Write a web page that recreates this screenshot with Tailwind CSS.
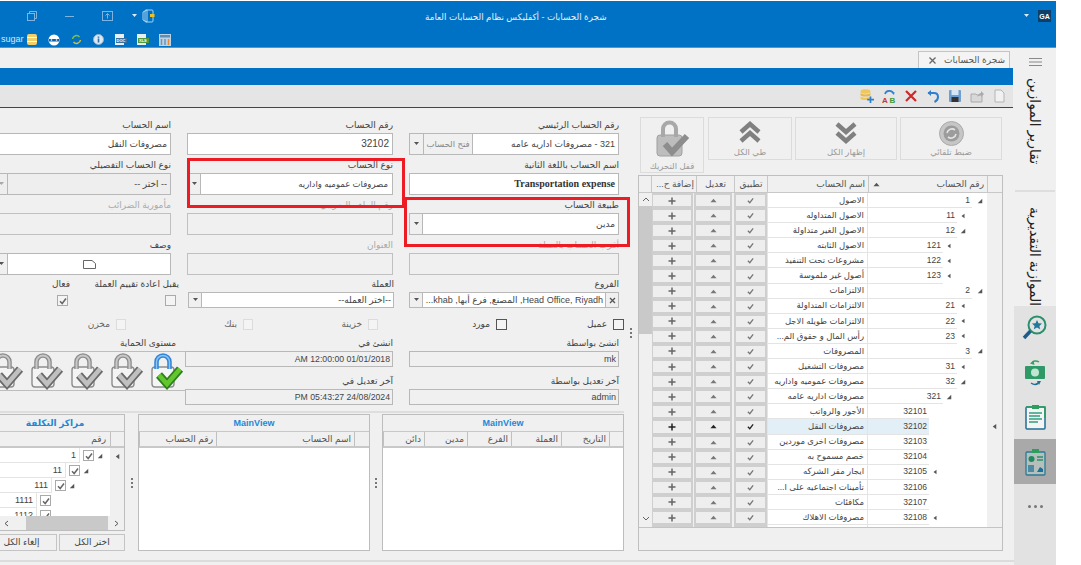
<!DOCTYPE html>
<html lang="ar">
<head>
<meta charset="utf-8">
<title>شجرة الحسابات</title>
<script src="https://cdn.jsdelivr.net/npm/@tailwindcss/browser@4"></script>
</head>
<body class="bg-white overflow-hidden">
<svg class="hidden" width="0" height="0">
  <defs>
    <symbol id="exp" viewBox="0 0 8 8"><path d="M7 1V7H1Z" fill="#555"/></symbol>
    <symbol id="col" viewBox="0 0 8 8"><path d="M6 1V7L2 4Z" fill="#555"/></symbol>
    <symbol id="plus" viewBox="0 0 8 8"><path d="M4 .5V7.500M.5 4H7.500" stroke="currentColor" stroke-width="1.500" fill="none"/></symbol>
    <symbol id="up" viewBox="0 0 8 8"><path d="M4 2L7.500 6H.5Z" fill="currentColor"/></symbol>
    <symbol id="chk" viewBox="0 0 8 8"><path d="M1 4.200L3.200 6.500L7 1.500" stroke="currentColor" stroke-width="1.500" fill="none"/></symbol>
    <symbol id="lockg" viewBox="0 0 36 38">
      <rect x="5" y="15" width="22" height="20" rx="3" fill="#f4f4f4" stroke="#8d8d8d" stroke-width="1.400"/>
      <path d="M9.500 17V10a6.500 6.500 0 0 1 13 0v7" fill="none" stroke="#8a8a8a" stroke-width="4.500"/>
      <path d="M9.500 17V10a6.500 6.500 0 0 1 13 0v7" fill="none" stroke="#c8c8c8" stroke-width="2"/>
      <path d="M12 23L20 32L33 17" fill="none" stroke="#6a6a6a" stroke-width="8"/>
      <path d="M12 23L20 32L33 17" fill="none" stroke="#c0c0c0" stroke-width="4.500"/>
    </symbol>
    <symbol id="lockc" viewBox="0 0 36 38">
      <rect x="5" y="15" width="22" height="20" rx="3" fill="#f5f5f5" stroke="#8d8d8d" stroke-width="1.400"/>
      <path d="M9.500 17V10a6.500 6.500 0 0 1 13 0v7" fill="none" stroke="#2f84d8" stroke-width="4.500"/>
      <path d="M9.500 17V10a6.500 6.500 0 0 1 13 0v7" fill="none" stroke="#8cc4f4" stroke-width="1.500"/>
      <path d="M12 23L20 32L33 17" fill="none" stroke="#2e7d1e" stroke-width="8"/>
      <path d="M12 23L20 32L33 17" fill="none" stroke="#62c72e" stroke-width="4.500"/>
    </symbol>
  </defs>
</svg>

<div class="w-[1081px] h-[565px] pt-px overflow-hidden bg-white text-[#444] text-[9px] leading-none [font-family:'Liberation_Sans','DejaVu_Sans',sans-serif]">
<div class="w-[1056px] h-[564px] flex flex-col">

  <!-- title bar -->
  <header class="h-[47px] shrink-0 bg-[#0072c6] flex flex-col border-b border-[#4a9ad8]">
    <div class="h-[30px] flex items-center relative">
      <svg class="ml-[27px] w-[10px] h-[10px]" viewBox="0 0 10 10" fill="none" stroke="#7fb4e0"><rect x=".5" y="2.500" width="7" height="7"/><path d="M2.500 2.500V.5H9.500V7.500H7.500"/></svg>
      <div class="ml-[28px] w-[9px] h-px bg-[#7fb4e0]"></div>
      <svg class="ml-[28px] w-[11px] h-[10px]" viewBox="0 0 11 10" fill="none" stroke="#7fb4e0"><rect x=".5" y=".5" width="10" height="9"/><path d="M5.500 7.500V3M3.500 4.500L5.500 2.500L7.500 4.500"/></svg>
      <svg class="ml-[19px] w-[5px] h-[4px]" viewBox="0 0 5 4"><path d="M0 0H5L2.500 3Z" fill="#dcecf8"/></svg>
      <svg class="ml-[5px] w-[13px] h-[14px]" viewBox="0 0 13 14" fill="none" stroke="#a9d3f3"><rect x="3" y="1" width="8" height="12" rx="1"/><path d="M1 3L5 1V13L1 11Z"/><rect x="8" y="5" width="4.500" height="3" fill="#f0c020" stroke="none"/></svg>
      <span dir="rtl" class="absolute left-[425px] top-[12px] text-[8.800px] text-[#e6f1fa] whitespace-nowrap">شجرة الحسابات - أكفليكس نظام الحسابات العامة</span>
      <svg class="ml-auto w-[5px] h-[4px]" viewBox="0 0 5 4"><path d="M0 0H5L2.500 3Z" fill="#dcecf8"/></svg>
      <div class="ml-[9px] mr-[5px] w-[13px] h-[12px] bg-[#0f3f66] text-white text-[7px] font-bold flex items-center justify-center">GA</div>
    </div>
    <div class="h-[16px] flex items-center text-[#d6e8f6] text-[9px] pt-px">
      <span class="w-[27px] pl-px text-left">sugar</span>
      <svg class="w-[10px] h-[11px]" viewBox="0 0 10 11"><rect width="10" height="11" rx="2" fill="#f3cf6a"/><path d="M0 3.500H10M0 7.500H10" stroke="#fff"/></svg>
      <svg class="ml-[11px] w-[12px] h-[12px]" viewBox="0 0 12 12"><circle cx="6" cy="6" r="5.500" fill="#fff"/><rect x="1" y="5" width="10" height="2.500" fill="#0f5fa8"/><circle cx="3.500" cy="6" r=".8" fill="#fff"/><circle cx="8.500" cy="6" r=".8" fill="#fff"/></svg>
      <svg class="ml-[11px] w-[11px] h-[11px]" viewBox="0 0 11 11" fill="none" stroke="#7fbf4a" stroke-width="1.500"><path d="M1.500 5a4 4 0 0 1 7-2"/><path d="M9.500 6a4 4 0 0 1-7 2" stroke="#c9c34a"/></svg>
      <svg class="ml-[11px] w-[11px] h-[11px]" viewBox="0 0 11 11"><circle cx="5.500" cy="5.500" r="5" fill="#dce8f2" stroke="#8fb2cc"/><rect x="4.700" y="4.500" width="1.600" height="4" fill="#2f6ea5"/><rect x="4.700" y="2.500" width="1.600" height="1.300" fill="#2f6ea5"/></svg>
      <svg class="ml-[11px] w-[12px] h-[11px]" viewBox="0 0 12 11"><rect x="0" y="0" width="9" height="11" fill="#e7eef4"/><rect x="1" y="4" width="11" height="5" fill="#3c6f9e"/><text x="1.500" y="8.200" font-size="4" font-weight="700" fill="#fff">DOC</text></svg>
      <svg class="ml-[10px] w-[12px] h-[11px]" viewBox="0 0 12 11"><rect x="0" y="0" width="9" height="11" fill="#e7eef4"/><rect x="1" y="4" width="11" height="5" fill="#4f9a3f"/><text x="2" y="8.200" font-size="4" font-weight="700" fill="#fff">XLS</text></svg>
      <svg class="ml-[10px] w-[12px] h-[12px]" viewBox="0 0 12 12"><rect width="12" height="12" fill="#bcd3e6"/><rect x="1" y="1" width="10" height="2.500" fill="#5f8db3"/><path d="M2.500 5V11M6 5V11" stroke="#6f93b0" stroke-width="1.500"/><path d="M9.500 5V11" stroke="#e08a3c" stroke-width="1.500"/></svg>
    </div>
  </header>

  <div class="flex-1 flex min-h-0">
    <!-- main -->
    <main dir="rtl" class="w-[1014px] shrink-0 flex flex-col bg-[#f0f0f0] overflow-hidden">
      <div class="h-[20px] shrink-0 flex items-end pr-[4px]">
        <div class="w-[92px] h-[17px] bg-[#f4f4f4] border border-b-0 border-[#c4c4c4] flex items-center justify-between pr-[4px] pl-[10px] text-[9px] text-[#555]">
          <span>شجرة الحسابات</span>
          <svg class="w-[7px] h-[7px]" viewBox="0 0 7 7"><path d="M.5 .5L6.500 6.500M6.500 .5L.5 6.500" stroke="#666" stroke-width="1.300"/></svg>
        </div>
      </div>
      <div class="h-[17px] shrink-0 bg-[#0072c6] mr-px"></div>
      <div class="h-[23px] shrink-0 bg-[#e5e5e5] border-b border-[#444] flex items-center gap-[8px] pr-[7px] mr-px">
        <svg class="w-[14px] h-[14px]" viewBox="0 0 14 14" fill="#f1f1f1" stroke="#b5b5b5"><path d="M3 1H9L12 4V13H3Z"/></svg>
        <svg class="w-[14px] h-[14px]" viewBox="0 0 14 14"><path d="M1 5H6L7 6H12V13H1Z" fill="#d8d8d8" stroke="#aaa"/><path d="M7 8C8 5 10 4 11 4V2L14 5L11 8V6C9.500 6 8 7 7 8Z" fill="#aaa"/></svg>
        <svg class="w-[14px] h-[14px]" viewBox="0 0 14 14"><rect x="1" y="1" width="12" height="12" rx="1" fill="#6f9fd0"/><rect x="3.500" y="1" width="7" height="5" fill="#d7e6f4"/><rect x="3.500" y="8" width="7" height="5" fill="#333"/></svg>
        <svg class="w-[14px] h-[14px]" viewBox="0 0 14 14" fill="none"><path d="M2 4H8C11 4 12 6 12 8C12 10.500 10.500 12 8.500 13" stroke="#2f7fd0" stroke-width="2"/><path d="M5 1L1.500 4L5 7Z" fill="#2f7fd0"/></svg>
        <svg class="w-[14px] h-[14px]" viewBox="0 0 14 14"><path d="M2 2L12 12M12 2L2 12" stroke="#cc2a2a" stroke-width="2.200"/></svg>
        <svg class="w-[14px] h-[14px]" viewBox="0 0 14 14"><path d="M3 5C4 1 10 1 11 4" fill="none" stroke="#2f7fd0" stroke-width="1.600"/><path d="M9.500 3.500L12.500 3L12 6Z" fill="#2f7fd0"/><text x="0" y="13.500" direction="ltr" font-size="8" font-weight="700" fill="#c83434">A</text><text x="7.500" y="13.500" direction="ltr" font-size="8" font-weight="700" fill="#3d9a3d">B</text></svg>
        <svg class="w-[14px] h-[14px]" viewBox="0 0 14 14"><ellipse cx="5.500" cy="2.500" rx="5" ry="2.200" fill="#f0c75c"/><path d="M.5 3.500C.5 6 10.500 6 10.500 3.500V6C10.500 8 .5 8 .5 6Z" fill="#e8b84a"/><path d="M.5 7C.5 9.200 10.500 9.200 10.500 7V9.500C10.500 11.500 .5 11.500 .5 9.500Z" fill="#f0c75c"/><path d="M10.500 7.500V14M7.200 10.700H14" stroke="#2f7fd0" stroke-width="1.700"/></svg>
      </div>

      <div class="h-[454px] shrink-0 border-b-2 border-[#dcdcdc] flex pr-[11px]">
        <!-- accounts tree panel -->
        <section class="w-[365px] shrink-0 flex flex-col pt-[9px]">
          <div class="h-[58px] shrink-0 flex items-start text-[8.500px] text-[#9a9a9a] pr-px">
            <div class="w-[102px] h-[43px] border border-[#dcdcdc] flex flex-col items-center justify-between py-[3px]">
              <svg class="w-[25px] h-[25px]" viewBox="0 0 25 25"><circle cx="12.500" cy="12.500" r="12" fill="#c6c6c6" stroke="#aaa"/><circle cx="12.500" cy="12.500" r="8" fill="#9c9c9c"/><path d="M8 12a5 5 0 0 1 8-3M17 13a5 5 0 0 1-8 3" stroke="#e4e4e4" stroke-width="1.600" fill="none"/></svg>
              <span>ضبط تلقائي</span>
            </div>
            <div class="w-[102px] h-[43px] mr-[3px] border border-[#dcdcdc] flex flex-col items-center justify-between py-[3px]">
              <svg class="w-[22px] h-[23px]" viewBox="0 0 22 23" fill="none" stroke="#808080" stroke-width="4.500"><path d="M2 3L11 11L20 3M2 12L11 20L20 12"/></svg>
              <span>إظهار الكل</span>
            </div>
            <div class="w-[84px] h-[43px] mr-[3px] border border-[#dcdcdc] flex flex-col items-center justify-between py-[3px]">
              <svg class="w-[22px] h-[23px]" viewBox="0 0 22 23" fill="none" stroke="#808080" stroke-width="4.500"><path d="M2 11L11 3L20 11M2 20L11 12L20 20"/></svg>
              <span>طي الكل</span>
            </div>
            <div class="w-[64px] h-[56px] mr-[4px] border border-[#dcdcdc] flex flex-col items-center justify-between py-[2px] text-[8.500px]">
              <svg class="w-[36px] h-[38px]" viewBox="0 0 36 38"><rect x="3" y="15" width="25" height="21" rx="3" fill="#bdbdbd" stroke="#a0a0a0"/><path d="M9 17V9a6.500 6.500 0 0 1 13 0v8" fill="none" stroke="#a8a8a8" stroke-width="4"/><path d="M11 24L18 32L33 16" fill="none" stroke="#8d8d8d" stroke-width="6"/></svg>
              <span>قفل التحريك</span>
            </div>
          </div>

          <div class="h-[376px] shrink-0 border border-[#bfbfbf] flex flex-col">
            <!-- header -->
            <div class="h-[17px] shrink-0 flex text-[9px] text-[#555] border-b border-[#c8c8c8] bg-[#f0f0f0]">
              <div class="w-[15px] shrink-0 border-l border-[#c8c8c8]"></div>
              <div class="w-[119px] shrink-0 border-l border-[#c8c8c8] flex items-center justify-between pr-[3px] pl-[4px]"><span>رقم الحساب</span><svg class="w-[7px] h-[7px] text-[#555]"><use href="#up"/></svg></div>
              <div class="w-[101px] shrink-0 border-l border-[#c8c8c8] flex items-center pr-[3px]">اسم الحساب</div>
              <div class="w-[33px] shrink-0 border-l border-[#c8c8c8] flex items-center justify-center">تطبيق</div>
              <div class="w-[38px] shrink-0 border-l border-[#c8c8c8] flex items-center justify-center">تعديل</div>
              <div class="w-[45px] shrink-0 border-l border-[#c8c8c8] flex items-center pr-[2px] whitespace-nowrap">إضافة ح...</div>
            </div>
            <!-- body -->
            <div class="h-[334px] shrink-0 flex overflow-hidden">
              <div class="w-[350px] shrink-0 flex flex-col text-[8.500px]">
                <div class="h-[15.100px] shrink-0 flex"><div class="w-[15px] bg-[#f0f0f0] shrink-0"></div><div class="w-[119px] flex shrink-0 bg-white"><div class="w-[15px] shrink-0 flex items-center justify-center"><svg class="w-[6px] h-[6px]"><use href="#exp"/></svg></div><div class="flex-1 bg-white border-b border-[#e4e4e4] pr-[2px] flex items-center"><span dir="ltr">1</span></div></div><div class="w-[101px] shrink-0 bg-white border-x border-b border-[#e4e4e4] pr-[3px] flex items-center">الاصول</div><div class="w-[33px] shrink-0 bg-[#eeeeee] border-2 border-[#cfcfcf] flex items-center justify-center text-[#777]"><svg class="w-[7px] h-[7px]"><use href="#chk"/></svg></div><div class="w-[38px] shrink-0 mr-[2px] bg-[#eeeeee] border-2 border-[#cfcfcf] flex items-center justify-center text-[#777]"><svg class="w-[7px] h-[7px]"><use href="#up"/></svg></div><div class="w-[42px] shrink-0 mr-[1px] bg-[#eeeeee] border-2 border-[#cfcfcf] flex items-center justify-center text-[#666]"><svg class="w-[8px] h-[8px]"><use href="#plus"/></svg></div></div>
                <div class="h-[15.100px] shrink-0 flex"><div class="w-[15px] bg-[#f0f0f0] shrink-0"></div><div class="w-[119px] flex shrink-0 bg-white"><div class="w-[30px] shrink-0 flex items-center justify-end pl-[3px]"><svg class="w-[6px] h-[6px]"><use href="#col"/></svg></div><div class="flex-1 bg-white border-b border-[#e4e4e4] pr-[2px] flex items-center">11</div></div><div class="w-[101px] shrink-0 bg-white border-x border-b border-[#e4e4e4] pr-[3px] flex items-center">الاصول المتداوله</div><div class="w-[33px] shrink-0 bg-[#eeeeee] border-2 border-[#cfcfcf] flex items-center justify-center text-[#777]"><svg class="w-[7px] h-[7px]"><use href="#chk"/></svg></div><div class="w-[38px] shrink-0 mr-[2px] bg-[#eeeeee] border-2 border-[#cfcfcf] flex items-center justify-center text-[#777]"><svg class="w-[7px] h-[7px]"><use href="#up"/></svg></div><div class="w-[42px] shrink-0 mr-[1px] bg-[#eeeeee] border-2 border-[#cfcfcf] flex items-center justify-center text-[#666]"><svg class="w-[8px] h-[8px]"><use href="#plus"/></svg></div></div>
                <div class="h-[15.100px] shrink-0 flex"><div class="w-[15px] bg-[#f0f0f0] shrink-0"></div><div class="w-[119px] flex shrink-0 bg-white"><div class="w-[30px] shrink-0 flex items-center justify-end pl-[3px]"><svg class="w-[6px] h-[6px]"><use href="#exp"/></svg></div><div class="flex-1 bg-white border-b border-[#e4e4e4] pr-[2px] flex items-center">12</div></div><div class="w-[101px] shrink-0 bg-white border-x border-b border-[#e4e4e4] pr-[3px] flex items-center">الاصول الغير متداولة</div><div class="w-[33px] shrink-0 bg-[#eeeeee] border-2 border-[#cfcfcf] flex items-center justify-center text-[#777]"><svg class="w-[7px] h-[7px]"><use href="#chk"/></svg></div><div class="w-[38px] shrink-0 mr-[2px] bg-[#eeeeee] border-2 border-[#cfcfcf] flex items-center justify-center text-[#777]"><svg class="w-[7px] h-[7px]"><use href="#up"/></svg></div><div class="w-[42px] shrink-0 mr-[1px] bg-[#eeeeee] border-2 border-[#cfcfcf] flex items-center justify-center text-[#666]"><svg class="w-[8px] h-[8px]"><use href="#plus"/></svg></div></div>
                <div class="h-[15.100px] shrink-0 flex"><div class="w-[15px] bg-[#f0f0f0] shrink-0"></div><div class="w-[119px] flex shrink-0 bg-white"><div class="w-[44px] shrink-0 flex items-center justify-end pl-[3px]"><svg class="w-[6px] h-[6px]"><use href="#col"/></svg></div><div class="flex-1 bg-white border-b border-[#e4e4e4] pr-[2px] flex items-center">121</div></div><div class="w-[101px] shrink-0 bg-white border-x border-b border-[#e4e4e4] pr-[3px] flex items-center">الاصول الثابته</div><div class="w-[33px] shrink-0 bg-[#eeeeee] border-2 border-[#cfcfcf] flex items-center justify-center text-[#777]"><svg class="w-[7px] h-[7px]"><use href="#chk"/></svg></div><div class="w-[38px] shrink-0 mr-[2px] bg-[#eeeeee] border-2 border-[#cfcfcf] flex items-center justify-center text-[#777]"><svg class="w-[7px] h-[7px]"><use href="#up"/></svg></div><div class="w-[42px] shrink-0 mr-[1px] bg-[#eeeeee] border-2 border-[#cfcfcf] flex items-center justify-center text-[#666]"><svg class="w-[8px] h-[8px]"><use href="#plus"/></svg></div></div>
                <div class="h-[15.100px] shrink-0 flex"><div class="w-[15px] bg-[#f0f0f0] shrink-0"></div><div class="w-[119px] flex shrink-0 bg-white"><div class="w-[44px] shrink-0 flex items-center justify-end pl-[3px]"><svg class="w-[6px] h-[6px]"><use href="#col"/></svg></div><div class="flex-1 bg-white border-b border-[#e4e4e4] pr-[2px] flex items-center">122</div></div><div class="w-[101px] shrink-0 bg-white border-x border-b border-[#e4e4e4] pr-[3px] flex items-center">مشروعات تحت التنفيذ</div><div class="w-[33px] shrink-0 bg-[#eeeeee] border-2 border-[#cfcfcf] flex items-center justify-center text-[#777]"><svg class="w-[7px] h-[7px]"><use href="#chk"/></svg></div><div class="w-[38px] shrink-0 mr-[2px] bg-[#eeeeee] border-2 border-[#cfcfcf] flex items-center justify-center text-[#777]"><svg class="w-[7px] h-[7px]"><use href="#up"/></svg></div><div class="w-[42px] shrink-0 mr-[1px] bg-[#eeeeee] border-2 border-[#cfcfcf] flex items-center justify-center text-[#666]"><svg class="w-[8px] h-[8px]"><use href="#plus"/></svg></div></div>
                <div class="h-[15.100px] shrink-0 flex"><div class="w-[15px] bg-[#f0f0f0] shrink-0"></div><div class="w-[119px] flex shrink-0 bg-white"><div class="w-[44px] shrink-0 flex items-center justify-end pl-[3px]"><svg class="w-[6px] h-[6px]"><use href="#col"/></svg></div><div class="flex-1 bg-white border-b border-[#e4e4e4] pr-[2px] flex items-center">123</div></div><div class="w-[101px] shrink-0 bg-white border-x border-b border-[#e4e4e4] pr-[3px] flex items-center">أصول غير ملموسة</div><div class="w-[33px] shrink-0 bg-[#eeeeee] border-2 border-[#cfcfcf] flex items-center justify-center text-[#777]"><svg class="w-[7px] h-[7px]"><use href="#chk"/></svg></div><div class="w-[38px] shrink-0 mr-[2px] bg-[#eeeeee] border-2 border-[#cfcfcf] flex items-center justify-center text-[#777]"><svg class="w-[7px] h-[7px]"><use href="#up"/></svg></div><div class="w-[42px] shrink-0 mr-[1px] bg-[#eeeeee] border-2 border-[#cfcfcf] flex items-center justify-center text-[#666]"><svg class="w-[8px] h-[8px]"><use href="#plus"/></svg></div></div>
                <div class="h-[15.100px] shrink-0 flex"><div class="w-[15px] bg-[#f0f0f0] shrink-0"></div><div class="w-[119px] flex shrink-0 bg-white"><div class="w-[15px] shrink-0 flex items-center justify-center"><svg class="w-[6px] h-[6px]"><use href="#exp"/></svg></div><div class="flex-1 bg-white border-b border-[#e4e4e4] pr-[2px] flex items-center">2</div></div><div class="w-[101px] shrink-0 bg-white border-x border-b border-[#e4e4e4] pr-[3px] flex items-center">الالتزامات</div><div class="w-[33px] shrink-0 bg-[#eeeeee] border-2 border-[#cfcfcf] flex items-center justify-center text-[#777]"><svg class="w-[7px] h-[7px]"><use href="#chk"/></svg></div><div class="w-[38px] shrink-0 mr-[2px] bg-[#eeeeee] border-2 border-[#cfcfcf] flex items-center justify-center text-[#777]"><svg class="w-[7px] h-[7px]"><use href="#up"/></svg></div><div class="w-[42px] shrink-0 mr-[1px] bg-[#eeeeee] border-2 border-[#cfcfcf] flex items-center justify-center text-[#666]"><svg class="w-[8px] h-[8px]"><use href="#plus"/></svg></div></div>
                <div class="h-[15.100px] shrink-0 flex"><div class="w-[15px] bg-[#f0f0f0] shrink-0"></div><div class="w-[119px] flex shrink-0 bg-white"><div class="w-[30px] shrink-0 flex items-center justify-end pl-[3px]"><svg class="w-[6px] h-[6px]"><use href="#col"/></svg></div><div class="flex-1 bg-white border-b border-[#e4e4e4] pr-[2px] flex items-center">21</div></div><div class="w-[101px] shrink-0 bg-white border-x border-b border-[#e4e4e4] pr-[3px] flex items-center">الالتزامات المتداولة</div><div class="w-[33px] shrink-0 bg-[#eeeeee] border-2 border-[#cfcfcf] flex items-center justify-center text-[#777]"><svg class="w-[7px] h-[7px]"><use href="#chk"/></svg></div><div class="w-[38px] shrink-0 mr-[2px] bg-[#eeeeee] border-2 border-[#cfcfcf] flex items-center justify-center text-[#777]"><svg class="w-[7px] h-[7px]"><use href="#up"/></svg></div><div class="w-[42px] shrink-0 mr-[1px] bg-[#eeeeee] border-2 border-[#cfcfcf] flex items-center justify-center text-[#666]"><svg class="w-[8px] h-[8px]"><use href="#plus"/></svg></div></div>
                <div class="h-[15.100px] shrink-0 flex"><div class="w-[15px] bg-[#f0f0f0] shrink-0"></div><div class="w-[119px] flex shrink-0 bg-white"><div class="w-[30px] shrink-0 flex items-center justify-end pl-[3px]"><svg class="w-[6px] h-[6px]"><use href="#col"/></svg></div><div class="flex-1 bg-white border-b border-[#e4e4e4] pr-[2px] flex items-center">22</div></div><div class="w-[101px] shrink-0 bg-white border-x border-b border-[#e4e4e4] pr-[3px] flex items-center">الالتزامات طويله الاجل</div><div class="w-[33px] shrink-0 bg-[#eeeeee] border-2 border-[#cfcfcf] flex items-center justify-center text-[#777]"><svg class="w-[7px] h-[7px]"><use href="#chk"/></svg></div><div class="w-[38px] shrink-0 mr-[2px] bg-[#eeeeee] border-2 border-[#cfcfcf] flex items-center justify-center text-[#777]"><svg class="w-[7px] h-[7px]"><use href="#up"/></svg></div><div class="w-[42px] shrink-0 mr-[1px] bg-[#eeeeee] border-2 border-[#cfcfcf] flex items-center justify-center text-[#666]"><svg class="w-[8px] h-[8px]"><use href="#plus"/></svg></div></div>
                <div class="h-[15.100px] shrink-0 flex"><div class="w-[15px] bg-[#f0f0f0] shrink-0"></div><div class="w-[119px] flex shrink-0 bg-white"><div class="w-[30px] shrink-0 flex items-center justify-end pl-[3px]"><svg class="w-[6px] h-[6px]"><use href="#col"/></svg></div><div class="flex-1 bg-white border-b border-[#e4e4e4] pr-[2px] flex items-center">23</div></div><div class="w-[101px] shrink-0 bg-white border-x border-b border-[#e4e4e4] pr-[3px] flex items-center">رأس المال و حقوق الم...</div><div class="w-[33px] shrink-0 bg-[#eeeeee] border-2 border-[#cfcfcf] flex items-center justify-center text-[#777]"><svg class="w-[7px] h-[7px]"><use href="#chk"/></svg></div><div class="w-[38px] shrink-0 mr-[2px] bg-[#eeeeee] border-2 border-[#cfcfcf] flex items-center justify-center text-[#777]"><svg class="w-[7px] h-[7px]"><use href="#up"/></svg></div><div class="w-[42px] shrink-0 mr-[1px] bg-[#eeeeee] border-2 border-[#cfcfcf] flex items-center justify-center text-[#666]"><svg class="w-[8px] h-[8px]"><use href="#plus"/></svg></div></div>
                <div class="h-[15.100px] shrink-0 flex"><div class="w-[15px] bg-[#f0f0f0] shrink-0"></div><div class="w-[119px] flex shrink-0 bg-white"><div class="w-[15px] shrink-0 flex items-center justify-center"><svg class="w-[6px] h-[6px]"><use href="#exp"/></svg></div><div class="flex-1 bg-white border-b border-[#e4e4e4] pr-[2px] flex items-center">3</div></div><div class="w-[101px] shrink-0 bg-white border-x border-b border-[#e4e4e4] pr-[3px] flex items-center">المصروفات</div><div class="w-[33px] shrink-0 bg-[#eeeeee] border-2 border-[#cfcfcf] flex items-center justify-center text-[#777]"><svg class="w-[7px] h-[7px]"><use href="#chk"/></svg></div><div class="w-[38px] shrink-0 mr-[2px] bg-[#eeeeee] border-2 border-[#cfcfcf] flex items-center justify-center text-[#777]"><svg class="w-[7px] h-[7px]"><use href="#up"/></svg></div><div class="w-[42px] shrink-0 mr-[1px] bg-[#eeeeee] border-2 border-[#cfcfcf] flex items-center justify-center text-[#666]"><svg class="w-[8px] h-[8px]"><use href="#plus"/></svg></div></div>
                <div class="h-[15.100px] shrink-0 flex"><div class="w-[15px] bg-[#f0f0f0] shrink-0"></div><div class="w-[119px] flex shrink-0 bg-white"><div class="w-[30px] shrink-0 flex items-center justify-end pl-[3px]"><svg class="w-[6px] h-[6px]"><use href="#col"/></svg></div><div class="flex-1 bg-white border-b border-[#e4e4e4] pr-[2px] flex items-center">31</div></div><div class="w-[101px] shrink-0 bg-white border-x border-b border-[#e4e4e4] pr-[3px] flex items-center">مصروفات التشغيل</div><div class="w-[33px] shrink-0 bg-[#eeeeee] border-2 border-[#cfcfcf] flex items-center justify-center text-[#777]"><svg class="w-[7px] h-[7px]"><use href="#chk"/></svg></div><div class="w-[38px] shrink-0 mr-[2px] bg-[#eeeeee] border-2 border-[#cfcfcf] flex items-center justify-center text-[#777]"><svg class="w-[7px] h-[7px]"><use href="#up"/></svg></div><div class="w-[42px] shrink-0 mr-[1px] bg-[#eeeeee] border-2 border-[#cfcfcf] flex items-center justify-center text-[#666]"><svg class="w-[8px] h-[8px]"><use href="#plus"/></svg></div></div>
                <div class="h-[15.100px] shrink-0 flex"><div class="w-[15px] bg-[#f0f0f0] shrink-0"></div><div class="w-[119px] flex shrink-0 bg-white"><div class="w-[30px] shrink-0 flex items-center justify-end pl-[3px]"><svg class="w-[6px] h-[6px]"><use href="#exp"/></svg></div><div class="flex-1 bg-white border-b border-[#e4e4e4] pr-[2px] flex items-center">32</div></div><div class="w-[101px] shrink-0 bg-white border-x border-b border-[#e4e4e4] pr-[3px] flex items-center">مصروفات عموميه واداريه</div><div class="w-[33px] shrink-0 bg-[#eeeeee] border-2 border-[#cfcfcf] flex items-center justify-center text-[#777]"><svg class="w-[7px] h-[7px]"><use href="#chk"/></svg></div><div class="w-[38px] shrink-0 mr-[2px] bg-[#eeeeee] border-2 border-[#cfcfcf] flex items-center justify-center text-[#777]"><svg class="w-[7px] h-[7px]"><use href="#up"/></svg></div><div class="w-[42px] shrink-0 mr-[1px] bg-[#eeeeee] border-2 border-[#cfcfcf] flex items-center justify-center text-[#666]"><svg class="w-[8px] h-[8px]"><use href="#plus"/></svg></div></div>
                <div class="h-[15.100px] shrink-0 flex"><div class="w-[15px] bg-[#f0f0f0] shrink-0"></div><div class="w-[119px] flex shrink-0 bg-white"><div class="w-[44px] shrink-0 flex items-center justify-end pl-[3px]"><svg class="w-[6px] h-[6px]"><use href="#exp"/></svg></div><div class="flex-1 bg-white border-b border-[#e4e4e4] pr-[2px] flex items-center">321</div></div><div class="w-[101px] shrink-0 bg-white border-x border-b border-[#e4e4e4] pr-[3px] flex items-center">مصروفات اداريه عامه</div><div class="w-[33px] shrink-0 bg-[#eeeeee] border-2 border-[#cfcfcf] flex items-center justify-center text-[#777]"><svg class="w-[7px] h-[7px]"><use href="#chk"/></svg></div><div class="w-[38px] shrink-0 mr-[2px] bg-[#eeeeee] border-2 border-[#cfcfcf] flex items-center justify-center text-[#777]"><svg class="w-[7px] h-[7px]"><use href="#up"/></svg></div><div class="w-[42px] shrink-0 mr-[1px] bg-[#eeeeee] border-2 border-[#cfcfcf] flex items-center justify-center text-[#666]"><svg class="w-[8px] h-[8px]"><use href="#plus"/></svg></div></div>
                <div class="h-[15.100px] shrink-0 flex"><div class="w-[15px] bg-[#f0f0f0] shrink-0"></div><div class="w-[119px] flex shrink-0 bg-white"><div class="w-[58px] shrink-0"></div><div class="flex-1 bg-white border-b border-[#e4e4e4] pr-[2px] flex items-center">32101</div></div><div class="w-[101px] shrink-0 bg-white border-x border-b border-[#e4e4e4] pr-[3px] flex items-center">الأجور والرواتب</div><div class="w-[33px] shrink-0 bg-[#eeeeee] border-2 border-[#cfcfcf] flex items-center justify-center text-[#777]"><svg class="w-[7px] h-[7px]"><use href="#chk"/></svg></div><div class="w-[38px] shrink-0 mr-[2px] bg-[#eeeeee] border-2 border-[#cfcfcf] flex items-center justify-center text-[#777]"><svg class="w-[7px] h-[7px]"><use href="#up"/></svg></div><div class="w-[42px] shrink-0 mr-[1px] bg-[#eeeeee] border-2 border-[#cfcfcf] flex items-center justify-center text-[#666]"><svg class="w-[8px] h-[8px]"><use href="#plus"/></svg></div></div>
                <div class="h-[15.100px] shrink-0 flex"><div class="w-[15px] bg-[#f0f0f0] shrink-0 flex items-center justify-center"><svg class="w-[7px] h-[7px]"><use href="#col"/></svg></div><div class="w-[119px] flex shrink-0 bg-white"><div class="w-[58px] shrink-0"></div><div class="flex-1 bg-[#e3eff7] border-b border-[#e4e4e4] pr-[2px] flex items-center">32102</div></div><div class="w-[101px] shrink-0 bg-[#e3eff7] border-x border-b border-[#e4e4e4] pr-[3px] flex items-center">مصروفات النقل</div><div class="w-[33px] shrink-0 bg-[#eeeeee] border-2 border-[#cfcfcf] flex items-center justify-center text-[#222]"><svg class="w-[7px] h-[7px]"><use href="#chk"/></svg></div><div class="w-[38px] shrink-0 mr-[2px] bg-[#eeeeee] border-2 border-[#cfcfcf] flex items-center justify-center text-[#222]"><svg class="w-[7px] h-[7px]"><use href="#up"/></svg></div><div class="w-[42px] shrink-0 mr-[1px] bg-[#eeeeee] border-2 border-[#cfcfcf] flex items-center justify-center text-[#222]"><svg class="w-[8px] h-[8px]"><use href="#plus"/></svg></div></div>
                <div class="h-[15.100px] shrink-0 flex"><div class="w-[15px] bg-[#f0f0f0] shrink-0"></div><div class="w-[119px] flex shrink-0 bg-white"><div class="w-[58px] shrink-0"></div><div class="flex-1 bg-white border-b border-[#e4e4e4] pr-[2px] flex items-center">32103</div></div><div class="w-[101px] shrink-0 bg-white border-x border-b border-[#e4e4e4] pr-[3px] flex items-center">مصروفات اخرى موردين</div><div class="w-[33px] shrink-0 bg-[#eeeeee] border-2 border-[#cfcfcf] flex items-center justify-center text-[#777]"><svg class="w-[7px] h-[7px]"><use href="#chk"/></svg></div><div class="w-[38px] shrink-0 mr-[2px] bg-[#eeeeee] border-2 border-[#cfcfcf] flex items-center justify-center text-[#777]"><svg class="w-[7px] h-[7px]"><use href="#up"/></svg></div><div class="w-[42px] shrink-0 mr-[1px] bg-[#eeeeee] border-2 border-[#cfcfcf] flex items-center justify-center text-[#666]"><svg class="w-[8px] h-[8px]"><use href="#plus"/></svg></div></div>
                <div class="h-[15.100px] shrink-0 flex"><div class="w-[15px] bg-[#f0f0f0] shrink-0"></div><div class="w-[119px] flex shrink-0 bg-white"><div class="w-[58px] shrink-0"></div><div class="flex-1 bg-white border-b border-[#e4e4e4] pr-[2px] flex items-center">32104</div></div><div class="w-[101px] shrink-0 bg-white border-x border-b border-[#e4e4e4] pr-[3px] flex items-center">خصم مسموح به</div><div class="w-[33px] shrink-0 bg-[#eeeeee] border-2 border-[#cfcfcf] flex items-center justify-center text-[#777]"><svg class="w-[7px] h-[7px]"><use href="#chk"/></svg></div><div class="w-[38px] shrink-0 mr-[2px] bg-[#eeeeee] border-2 border-[#cfcfcf] flex items-center justify-center text-[#777]"><svg class="w-[7px] h-[7px]"><use href="#up"/></svg></div><div class="w-[42px] shrink-0 mr-[1px] bg-[#eeeeee] border-2 border-[#cfcfcf] flex items-center justify-center text-[#666]"><svg class="w-[8px] h-[8px]"><use href="#plus"/></svg></div></div>
                <div class="h-[15.100px] shrink-0 flex"><div class="w-[15px] bg-[#f0f0f0] shrink-0"></div><div class="w-[119px] flex shrink-0 bg-white"><div class="w-[58px] shrink-0 flex items-center justify-end pl-[3px]"><svg class="w-[6px] h-[6px]"><use href="#col"/></svg></div><div class="flex-1 bg-white border-b border-[#e4e4e4] pr-[2px] flex items-center">32105</div></div><div class="w-[101px] shrink-0 bg-white border-x border-b border-[#e4e4e4] pr-[3px] flex items-center">ايجار مقر الشركه</div><div class="w-[33px] shrink-0 bg-[#eeeeee] border-2 border-[#cfcfcf] flex items-center justify-center text-[#777]"><svg class="w-[7px] h-[7px]"><use href="#chk"/></svg></div><div class="w-[38px] shrink-0 mr-[2px] bg-[#eeeeee] border-2 border-[#cfcfcf] flex items-center justify-center text-[#777]"><svg class="w-[7px] h-[7px]"><use href="#up"/></svg></div><div class="w-[42px] shrink-0 mr-[1px] bg-[#eeeeee] border-2 border-[#cfcfcf] flex items-center justify-center text-[#666]"><svg class="w-[8px] h-[8px]"><use href="#plus"/></svg></div></div>
                <div class="h-[15.100px] shrink-0 flex"><div class="w-[15px] bg-[#f0f0f0] shrink-0"></div><div class="w-[119px] flex shrink-0 bg-white"><div class="w-[58px] shrink-0"></div><div class="flex-1 bg-white border-b border-[#e4e4e4] pr-[2px] flex items-center">32106</div></div><div class="w-[101px] shrink-0 bg-white border-x border-b border-[#e4e4e4] pr-[3px] flex items-center whitespace-nowrap">تأمينات اجتماعيه على ا...</div><div class="w-[33px] shrink-0 bg-[#eeeeee] border-2 border-[#cfcfcf] flex items-center justify-center text-[#777]"><svg class="w-[7px] h-[7px]"><use href="#chk"/></svg></div><div class="w-[38px] shrink-0 mr-[2px] bg-[#eeeeee] border-2 border-[#cfcfcf] flex items-center justify-center text-[#777]"><svg class="w-[7px] h-[7px]"><use href="#up"/></svg></div><div class="w-[42px] shrink-0 mr-[1px] bg-[#eeeeee] border-2 border-[#cfcfcf] flex items-center justify-center text-[#666]"><svg class="w-[8px] h-[8px]"><use href="#plus"/></svg></div></div>
                <div class="h-[15.100px] shrink-0 flex"><div class="w-[15px] bg-[#f0f0f0] shrink-0"></div><div class="w-[119px] flex shrink-0 bg-white"><div class="w-[58px] shrink-0"></div><div class="flex-1 bg-white border-b border-[#e4e4e4] pr-[2px] flex items-center">32107</div></div><div class="w-[101px] shrink-0 bg-white border-x border-b border-[#e4e4e4] pr-[3px] flex items-center">مكافئات</div><div class="w-[33px] shrink-0 bg-[#eeeeee] border-2 border-[#cfcfcf] flex items-center justify-center text-[#777]"><svg class="w-[7px] h-[7px]"><use href="#chk"/></svg></div><div class="w-[38px] shrink-0 mr-[2px] bg-[#eeeeee] border-2 border-[#cfcfcf] flex items-center justify-center text-[#777]"><svg class="w-[7px] h-[7px]"><use href="#up"/></svg></div><div class="w-[42px] shrink-0 mr-[1px] bg-[#eeeeee] border-2 border-[#cfcfcf] flex items-center justify-center text-[#666]"><svg class="w-[8px] h-[8px]"><use href="#plus"/></svg></div></div>
                <div class="h-[15.100px] shrink-0 flex"><div class="w-[15px] bg-[#f0f0f0] shrink-0"></div><div class="w-[119px] flex shrink-0 bg-white"><div class="w-[58px] shrink-0 flex items-center justify-end pl-[3px]"><svg class="w-[6px] h-[6px]"><use href="#col"/></svg></div><div class="flex-1 bg-white border-b border-[#e4e4e4] pr-[2px] flex items-center">32108</div></div><div class="w-[101px] shrink-0 bg-white border-x border-b border-[#e4e4e4] pr-[3px] flex items-center">مصروفات الاهلاك</div><div class="w-[33px] shrink-0 bg-[#eeeeee] border-2 border-[#cfcfcf] flex items-center justify-center text-[#777]"><svg class="w-[7px] h-[7px]"><use href="#chk"/></svg></div><div class="w-[38px] shrink-0 mr-[2px] bg-[#eeeeee] border-2 border-[#cfcfcf] flex items-center justify-center text-[#777]"><svg class="w-[7px] h-[7px]"><use href="#up"/></svg></div><div class="w-[42px] shrink-0 mr-[1px] bg-[#eeeeee] border-2 border-[#cfcfcf] flex items-center justify-center text-[#666]"><svg class="w-[8px] h-[8px]"><use href="#plus"/></svg></div></div>
                <div class="h-[15.100px] shrink-0 flex"><div class="w-[15px] bg-[#f0f0f0] shrink-0"></div><div class="w-[119px] flex shrink-0 bg-white"><div class="w-[58px] shrink-0"></div><div class="flex-1 bg-white border-b border-[#e4e4e4]"></div></div><div class="w-[101px] shrink-0 bg-white border-x border-b border-[#e4e4e4]"></div><div class="w-[33px] shrink-0 bg-[#eeeeee] border-2 border-[#cfcfcf]"></div><div class="w-[38px] shrink-0 mr-[2px] bg-[#eeeeee] border-2 border-[#cfcfcf]"></div><div class="w-[42px] shrink-0 mr-[1px] bg-[#eeeeee] border-2 border-[#cfcfcf]"></div></div>
              </div>
              <div class="w-[13px] shrink-0 flex flex-col items-center bg-[#f0f0f0]">
                <svg class="mt-[4px] w-[8px] h-[5px]" viewBox="0 0 8 5" fill="none" stroke="#666"><path d="M1 4L4 1L7 4"/></svg>
                <div class="mt-[4px] w-full h-[128px] bg-[#c9c9c9]"></div>
                <svg class="mt-[182px] w-[8px] h-[5px]" viewBox="0 0 8 5" fill="none" stroke="#666"><path d="M1 1L4 4L7 1"/></svg>
              </div>
            </div>
            <div class="flex-1 border-t border-[#c4c4c4] bg-[#f0f0f0]"></div>
          </div>
        </section>

        <!-- splitter -->
        <div class="w-[14px] shrink-0 flex items-center justify-center h-[450px]">
          <div class="w-[2px] h-[10px] border-l-2 border-dotted border-[#777]"></div>
        </div>

        <!-- form + bottom -->
        <section class="w-[624px] shrink-0 overflow-hidden flex flex-col relative">
          <!-- form -->
          <div class="h-[297px] shrink-0 pt-[10px] pr-[5px] flex flex-col">
            <div class="w-[640px] grid grid-cols-[210px_206px_177px] gap-x-[16px] gap-y-[3px] [grid-auto-rows:37px]">
              <div class="flex flex-col"><label class="h-[15px] flex items-center">رقم الحساب الرئيسي</label><div class="h-[22px] bg-white border border-[#b8b8b8] flex"><div class="flex-1 flex items-center pr-[3px] text-[9px]">321 - مصروفات اداريه عامه</div><div class="w-[50px] bg-[#f0f0f0] border-x border-[#b8b8b8] flex items-center justify-center text-[#888] text-[8.500px]">فتح الحساب</div><div class="w-[13px] bg-[#f0f0f0] flex items-center justify-center"><svg class="w-[5px] h-[4px]" viewBox="0 0 5 4"><path d="M0 0H5L2.500 3Z" fill="#555"/></svg></div></div></div>
              <div class="flex flex-col"><label class="h-[15px] flex items-center">رقم الحساب</label><div class="h-[22px] bg-white border border-[#b8b8b8] flex items-center pr-[3px] text-[10px]">32102</div></div>
              <div class="flex flex-col"><label class="h-[15px] flex items-center">اسم الحساب</label><div class="h-[22px] bg-white border border-[#b8b8b8] flex items-center pr-[3px]">مصروفات النقل</div></div>

              <div class="flex flex-col"><label class="h-[15px] flex items-center">اسم الحساب باللغة الثانية</label><div class="h-[22px] bg-white border border-[#b8b8b8] flex items-center pr-[3px] [font-family:'Liberation_Serif',serif] font-bold text-[10px] text-[#333]">Transportation expense</div></div>
              <div class="flex flex-col"><label class="h-[15px] flex items-center">نوع الحساب</label><div class="h-[22px] bg-white border border-[#b8b8b8] flex"><div class="flex-1 flex items-center pr-[4px] text-[8.500px]">مصروفات عموميه واداريه</div><div class="w-[13px] bg-[#f0f0f0] border-r border-[#b8b8b8] flex items-center justify-center"><svg class="w-[5px] h-[4px]" viewBox="0 0 5 4"><path d="M0 0H5L2.500 3Z" fill="#555"/></svg></div></div></div>
              <div class="flex flex-col"><label class="h-[15px] flex items-center">نوع الحساب التفصيلي</label><div class="h-[22px] bg-[#eeeeee] border border-[#b8b8b8] flex"><div class="flex-1 flex items-center pr-[3px]">-- اختر --</div><div class="w-[13px] border-r border-[#b8b8b8] flex items-center justify-center"><svg class="w-[5px] h-[4px]" viewBox="0 0 5 4"><path d="M0 0H5L2.500 3Z" fill="#aaa"/></svg></div></div></div>

              <div class="flex flex-col"><label class="h-[15px] flex items-center">طبيعة الحساب</label><div class="h-[22px] bg-white border border-[#b8b8b8] flex"><div class="flex-1 flex items-center pr-[3px]">مدين</div><div class="w-[13px] bg-[#f0f0f0] border-r border-[#b8b8b8] flex items-center justify-center"><svg class="w-[5px] h-[4px]" viewBox="0 0 5 4"><path d="M0 0H5L2.500 3Z" fill="#555"/></svg></div></div></div>
              <div class="flex flex-col"><label class="h-[15px] flex items-center text-[#aaa]">رقم الملف الضريبي</label><div class="h-[22px] bg-[#f0f0f0] border border-[#c0c0c0]"></div></div>
              <div class="flex flex-col"><label class="h-[15px] flex items-center text-[#aaa]">مأمورية الضرائب</label><div class="h-[22px] bg-[#f0f0f0] border border-[#c0c0c0]"></div></div>

              <div class="flex flex-col"><label class="h-[15px] flex items-center text-[#aaa]">أقرب الحساب بالعملة</label><div class="h-[22px] bg-[#f0f0f0] border border-[#c0c0c0]"></div></div>
              <div class="flex flex-col"><label class="h-[15px] flex items-center text-[#aaa]">العنوان</label><div class="h-[22px] bg-[#f0f0f0] border border-[#c0c0c0]"></div></div>
              <div class="flex flex-col"><label class="h-[15px] flex items-center">وصف</label><div class="h-[22px] bg-white border border-[#b8b8b8] flex"><div class="flex-1 flex items-center justify-center"><svg class="w-[13px] h-[9px]" viewBox="0 0 13 9" fill="none" stroke="#666"><path d="M.5 .5H9L12.500 3.500V8.500H.5Z"/></svg></div><div class="w-[13px] bg-[#f0f0f0] border-r border-[#b8b8b8] flex items-center justify-center"><svg class="w-[5px] h-[4px]" viewBox="0 0 5 4"><path d="M0 0H5L2.500 3Z" fill="#555"/></svg></div></div></div>
            </div>

            <div class="w-[660px] mt-[2px] flex">
              <div class="w-[210px] shrink-0 flex flex-col"><label class="h-[15px] flex items-center">الفروع</label><div class="h-[16px] bg-white border border-[#b8b8b8] flex"><div class="w-[13px] bg-[#f0f0f0] border-l border-[#b8b8b8] flex items-center justify-center"><svg class="w-[7px] h-[7px]" viewBox="0 0 7 7"><path d="M1 1L6 6M6 1L1 6" stroke="#555" stroke-width="1.300"/></svg></div><div class="flex-1 min-w-0 flex items-center pr-[2px] text-[9px] whitespace-nowrap overflow-hidden">Head Office, Riyadh, المصنع, فرع أبها, khab...</div><div class="w-[13px] bg-[#f0f0f0] border-r border-[#b8b8b8] flex items-center justify-center"><svg class="w-[5px] h-[4px]" viewBox="0 0 5 4"><path d="M0 0H5L2.500 3Z" fill="#555"/></svg></div></div></div>
              <div class="w-[206px] shrink-0 mr-[15px] flex flex-col"><label class="h-[15px] flex items-center">العملة</label><div class="h-[16px] bg-white border border-[#b8b8b8] flex"><div class="flex-1 flex items-center pr-[2px]">--اختر العمله--</div><div class="w-[13px] bg-[#f0f0f0] border-r border-[#b8b8b8] flex items-center justify-center"><svg class="w-[5px] h-[4px]" viewBox="0 0 5 4"><path d="M0 0H5L2.500 3Z" fill="#555"/></svg></div></div></div>
              <div class="w-[109px] shrink-0 mr-[9px] flex flex-col"><label class="h-[15px] flex items-center whitespace-nowrap">يقبل اعادة تقييم العملة</label><div class="mt-[3px] mr-[3px] w-[11px] h-[11px] bg-[#f4f4f4] border border-[#aaa]"></div></div>
              <div class="w-[40px] shrink-0 flex flex-col"><label class="h-[15px] flex items-center">فعال</label><div class="mt-[3px] mr-[2px] w-[11px] h-[11px] bg-[#f4f4f4] border border-[#aaa] flex items-center justify-center text-[#666]"><svg class="w-[8px] h-[8px]"><use href="#chk"/></svg></div></div>
            </div>

            <div class="h-[28px] -mr-[5px] w-[640px] shrink-0 flex items-center pt-[4px]">
              <div class="w-[117px] shrink-0 flex items-center gap-[6px]"><div class="w-[11px] h-[11px] border border-[#555] bg-[#f4f4f4]"></div><span>عميل</span></div>
              <div class="w-[129px] shrink-0 flex items-center gap-[6px]"><div class="w-[11px] h-[11px] border border-[#555] bg-[#f4f4f4]"></div><span>مورد</span></div>
              <div class="w-[125px] shrink-0 flex items-center gap-[6px]"><div class="w-[10px] h-[11px] border border-[#dcdcdc] bg-[#f4f4f4]"></div><span class="text-[#666]">خزينة</span></div>
              <div class="w-[127px] shrink-0 flex items-center gap-[6px]"><div class="w-[10px] h-[11px] border border-[#dcdcdc] bg-[#f4f4f4]"></div><span class="text-[#666]">بنك</span></div>
              <div class="w-[100px] shrink-0 flex items-center gap-[6px]"><div class="w-[10px] h-[11px] border border-[#dcdcdc] bg-[#f4f4f4]"></div><span class="text-[#666]">مخزن</span></div>
            </div>

            <div class="w-[640px] flex">
              <div class="w-[210px] shrink-0 flex flex-col">
                <label class="h-[15px] flex items-center">انشئ بواسطة</label>
                <div class="h-[16px] bg-[#f0f0f0] border border-[#b8b8b8] flex items-center pr-[2px]">mk</div>
                <label class="h-[15px] mt-[7px] flex items-center">آخر تعديل بواسطة</label>
                <div class="h-[16px] bg-[#f0f0f0] border border-[#b8b8b8] flex items-center pr-[2px]">admin</div>
              </div>
              <div class="w-[208px] shrink-0 mr-[16px] flex flex-col">
                <label class="h-[15px] flex items-center">انشئ في</label>
                <div class="h-[16px] bg-[#f0f0f0] border border-[#b8b8b8] flex items-center pr-[2px] text-[8.700px]">01/01/2018 12:00:00 AM</div>
                <label class="h-[15px] mt-[7px] flex items-center">آخر تعديل في</label>
                <div class="h-[16px] bg-[#f0f0f0] border border-[#b8b8b8] flex items-center pr-[2px] text-[8.700px]">24/08/2024 05:43:27 PM</div>
              </div>
              <div class="w-[206px] shrink-0 flex flex-col">
                <label class="h-[15px] pr-[9px] flex items-center">مستوى الحماية</label>
                <div class="h-[40px] border-y border-[#bdbdbd] flex items-center gap-[4px] pr-[2px]">
                  <svg class="w-[36px] h-[38px] shrink-0"><use href="#lockc"/></svg>
                  <svg class="w-[36px] h-[38px] shrink-0"><use href="#lockg"/></svg>
                  <svg class="w-[36px] h-[38px] shrink-0"><use href="#lockg"/></svg>
                  <svg class="w-[36px] h-[38px] shrink-0"><use href="#lockg"/></svg>
                  <svg class="w-[36px] h-[38px] shrink-0"><use href="#lockg"/></svg>
                </div>
              </div>
            </div>
          </div>

          <div class="h-[2px] mt-[6px] shrink-0 bg-[#dedede]"></div>

          <!-- bottom panels -->
          <div class="mt-[1px] flex h-[137px] shrink-0">
            <div class="w-[242px] shrink-0 border border-[#bdbdbd] flex flex-col bg-white">
              <div class="h-[17px] shrink-0 bg-[#f0f0f0] border-b border-[#c8c8c8] flex items-center justify-center font-bold text-[#1f87d6]">MainView</div>
              <div class="h-[16px] shrink-0 bg-[#f0f0f0] border-b-2 border-[#c8c8c8] flex text-[#555]">
                <div class="w-[14px] shrink-0 border-l border-[#c0c0c0]"></div>
                <div class="w-[48px] shrink-0 border-l border-[#c0c0c0] flex items-center pr-[3px]">التاريخ</div>
                <div class="w-[50px] shrink-0 border-l border-[#c0c0c0] flex items-center pr-[3px]">العملة</div>
                <div class="w-[44px] shrink-0 border-l border-[#c0c0c0] flex items-center pr-[3px]">الفرع</div>
                <div class="w-[43px] shrink-0 border-l border-[#c0c0c0] flex items-center pr-[3px]">مدين</div>
                <div class="flex-1 border-l border-[#c0c0c0] flex items-center pr-[3px]">دائن</div>
              </div>
            </div>
            <div class="w-[12px] shrink-0 flex items-center justify-center"><div class="w-[2px] h-[10px] border-l-2 border-dotted border-[#777]"></div></div>
            <div class="w-[232px] shrink-0 border border-[#bdbdbd] flex flex-col bg-white">
              <div class="h-[17px] shrink-0 bg-[#f0f0f0] border-b border-[#c8c8c8] flex items-center justify-center font-bold text-[#1f87d6]">MainView</div>
              <div class="h-[16px] shrink-0 bg-[#f0f0f0] border-b-2 border-[#c8c8c8] flex text-[#555]">
                <div class="w-[15px] shrink-0 border-l border-[#c0c0c0]"></div>
                <div class="w-[138px] shrink-0 border-l border-[#c0c0c0] flex items-center pr-[3px]">اسم الحساب</div>
                <div class="flex-1 border-l border-[#c0c0c0] flex items-center pr-[3px]">رقم الحساب</div>
              </div>
            </div>
            <div class="w-[13px] shrink-0 flex items-center justify-center"><div class="w-[2px] h-[10px] border-l-2 border-dotted border-[#777]"></div></div>
            <div class="w-[140px] shrink-0 flex flex-col">
              <div class="h-[117px] shrink-0 border border-[#bdbdbd] flex flex-col">
                <div class="h-[17px] shrink-0 border-b border-[#c8c8c8] flex items-center justify-center font-bold text-[#1f87d6]">مراكز التكلفة</div>
                <div class="h-[16px] shrink-0 border-b-2 border-[#c8c8c8] flex text-[#555]"><div class="w-[14px] shrink-0 border-l border-[#c0c0c0]"></div><div class="flex items-center pr-[4px]">رقم</div></div>
                <div class="flex-1 min-h-0 flex overflow-hidden">
                  <div class="w-[14px] shrink-0 bg-[#f0f0f0] pt-[5px] pr-[3px]"><svg class="w-[7px] h-[7px]"><use href="#col"/></svg></div>
                  <div class="flex-1 bg-white flex flex-col overflow-hidden">
                    <div class="h-[15px] shrink-0 flex items-center"><svg class="w-[6px] h-[6px] mr-[7px]"><use href="#exp"/></svg><div class="w-[11px] h-[11px] mr-[3px] border border-[#aaa] text-[#666] flex items-center justify-center"><svg class="w-[8px] h-[8px]"><use href="#chk"/></svg></div><div class="flex-1 h-full mr-[3px] border-r border-b border-[#e4e4e4] pr-[3px] flex items-center">1</div></div>
                    <div class="h-[15px] shrink-0 flex items-center"><svg class="w-[6px] h-[6px] mr-[21px]"><use href="#exp"/></svg><div class="w-[11px] h-[11px] mr-[3px] border border-[#aaa] text-[#666] flex items-center justify-center"><svg class="w-[8px] h-[8px]"><use href="#chk"/></svg></div><div class="flex-1 h-full mr-[3px] border-r border-b border-[#e4e4e4] pr-[3px] flex items-center">11</div></div>
                    <div class="h-[15px] shrink-0 flex items-center"><svg class="w-[6px] h-[6px] mr-[35px]"><use href="#exp"/></svg><div class="w-[11px] h-[11px] mr-[3px] border border-[#aaa] text-[#666] flex items-center justify-center"><svg class="w-[8px] h-[8px]"><use href="#chk"/></svg></div><div class="flex-1 h-full mr-[3px] border-r border-b border-[#e4e4e4] pr-[3px] flex items-center">111</div></div>
                    <div class="h-[15px] shrink-0 flex items-center"><div class="w-[11px] h-[11px] mr-[59px] border border-[#aaa] text-[#666] flex items-center justify-center"><svg class="w-[8px] h-[8px]"><use href="#chk"/></svg></div><div class="flex-1 h-full mr-[3px] border-r border-b border-[#e4e4e4] pr-[3px] flex items-center">1111</div></div>
                    <div class="h-[15px] shrink-0 flex items-center"><div class="w-[11px] h-[11px] mr-[59px] border border-[#aaa] text-[#666] flex items-center justify-center"><svg class="w-[8px] h-[8px]"><use href="#chk"/></svg></div><div class="flex-1 h-full mr-[3px] border-r border-b border-[#e4e4e4] pr-[3px] flex items-center">1112</div></div>
                  </div>
                </div>
                <div class="h-[14px] shrink-0 bg-[#f0f0f0] flex items-center">
                  <svg class="w-[16px] h-[7px] shrink-0" viewBox="0 0 16 7" fill="none" stroke="#555"><path d="M7 1L10 3.500L7 6"/></svg>
                  <div class="w-[82px] h-full bg-[#c9c9c9] shrink-0"></div>
                  <svg class="w-[28px] h-[7px] shrink-0" viewBox="0 0 28 7" fill="none" stroke="#555"><path d="M10 1L7 3.500L10 6"/></svg>
                </div>
              </div>
              <div class="mt-[3px] h-[17px] flex gap-[2px]">
                <div class="w-[66px] shrink-0 border border-[#c4c4c4] bg-[#f0f0f0] flex items-center justify-center">اختر الكل</div>
                <div class="w-[71px] shrink-0 border border-[#c4c4c4] bg-[#f0f0f0] flex items-center justify-center">إلغاء الكل</div>
              </div>
            </div>
          </div>
        </section>
      </div>
      <div class="flex-1"></div>
    </main>

    <!-- right sidebar -->
    <aside class="w-[42px] shrink-0 flex flex-col bg-[#f0f0f0]">
      <div class="h-[144px] shrink-0 border-b-2 border-[#dedede] mx-px flex flex-col items-center overflow-hidden">
        <svg class="mt-[10px] w-[13px] h-[8px] shrink-0" viewBox="0 0 13 8" stroke="#888"><path d="M0 .5H13M0 4H13M0 7.500H13"/></svg>
        <div dir="rtl" class="mt-[12px] [writing-mode:vertical-rl] text-[14px] leading-[18px] text-[#222] whitespace-nowrap">تقارير الموازين</div>
      </div>
      <div class="h-[114px] shrink-0 flex justify-center overflow-hidden">
        <div dir="rtl" class="[writing-mode:vertical-rl] text-[14px] leading-[18px] text-[#222] whitespace-nowrap">الموازنة التقديرية</div>
      </div>
      <div class="flex-1 bg-[#e2e2e2] flex flex-col">
        <div class="h-[44px] flex items-center justify-center">
          <svg class="w-[26px] h-[26px]" viewBox="0 0 26 26" fill="none"><circle cx="15" cy="10" r="8.500" stroke="#2a8f6e" stroke-width="2"/><path d="M15 5l1.500 3.200 3.500.4-2.600 2.300.8 3.400L15 12.600l-3.200 1.700.8-3.400L10 8.600l3.500-.4Z" fill="#1f7a99"/><path d="M8.500 16L2 23" stroke="#1b5e8c" stroke-width="3.500"/></svg>
        </div>
        <div class="h-[45px] flex items-center justify-center">
          <svg class="w-[22px] h-[28px]" viewBox="0 0 22 28" fill="none"><path d="M15 3C12 1 9 2 8 4" stroke="#3aa060" stroke-width="1.500"/><path d="M9.500 1.500L6 4.500L10.500 6Z" fill="#3aa060"/><rect x="1" y="7" width="20" height="13" rx="1" fill="#2f9a68"/><circle cx="11" cy="13.500" r="4" fill="#bfe6d2"/><path d="M7 24C10 26 13 26 15 23" stroke="#1f6f96" stroke-width="1.500"/><path d="M13 22L17 22L15 26Z" fill="#1f6f96"/></svg>
        </div>
        <div class="h-[44px] flex items-center justify-center">
          <svg class="w-[21px] h-[26px]" viewBox="0 0 21 26" fill="none"><rect x="1" y="3" width="19" height="22" rx="1" fill="#f4f4f4" stroke="#1f6f96" stroke-width="1.500"/><path d="M1 3H20V14" stroke="#2e9e5f" stroke-width="1.500"/><rect x="7" y="1" width="7" height="4" fill="#2e9e5f"/><path d="M4 9H17M4 12H15M4 15H17M4 18H13" stroke="#2e9e7f" stroke-width="1.300"/></svg>
        </div>
        <div class="h-[45px] bg-[#a9a9a9] flex items-center justify-center">
          <svg class="w-[21px] h-[28px]" viewBox="0 0 21 28" fill="none"><rect x="1" y="4" width="19" height="23" rx="1" fill="#b5c0bc" stroke="#2c7a96" stroke-width="1.300"/><rect x="7" y="1" width="7" height="4" fill="#2e9e5f"/><circle cx="6.500" cy="11" r="3" fill="#1f8a5f"/><path d="M12 9H18M12 12H18" stroke="#2e8e6a" stroke-width="1.500"/><rect x="3" y="17" width="6" height="7" fill="#4f8aa5"/><path d="M12 24L15 19L18 21V24Z" fill="#1f6f96"/></svg>
        </div>
        <div class="h-[44px] flex items-center justify-center gap-[3px]">
          <span class="w-[3px] h-[3px] rounded-full bg-[#777]"></span><span class="w-[3px] h-[3px] rounded-full bg-[#777]"></span><span class="w-[3px] h-[3px] rounded-full bg-[#777]"></span>
        </div>
      </div>
    </aside>
  </div>
</div>
</div>

<!-- annotation boxes laid over the form -->
<div class="absolute left-[187px] top-[158px] w-[218px] h-[50px] border-[3.500px] border-[#ed1c24]"></div>
<div class="absolute left-[404px] top-[197px] w-[226px] h-[50px] border-[3.500px] border-[#ed1c24]"></div>
</body>
</html>
